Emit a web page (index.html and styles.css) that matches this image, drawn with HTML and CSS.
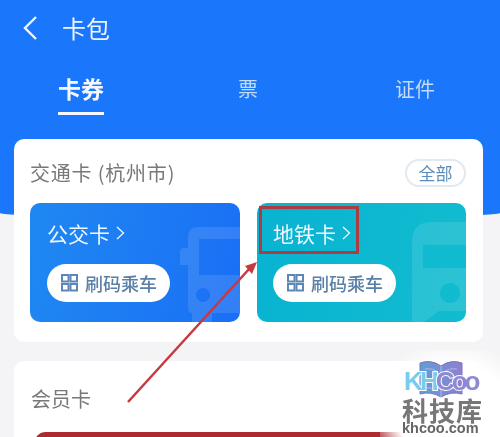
FILE: index.html
```html
<!DOCTYPE html>
<html lang="zh-CN">
<head>
  <meta charset="UTF-8" />
  <meta name="viewport" content="width=device-width, initial-scale=1.0" />
  <title>卡包</title>
  <link rel="stylesheet" href="styles.css">
</head>
<body>
  <div class="page">
    <div class="hero">
      <div class="topbar">
        <svg class="back" width="16" height="26" viewBox="0 0 16 26"><path d="M14 2 L3 13 L14 24" /></svg>
        <span class="title">卡包</span>
      </div>
      <div class="tabs">
        <span class="tab active">卡券</span>
        <span class="tab">票</span>
        <span class="tab">证件</span>
      </div>
    </div>

    <div class="content">
      <section class="card">
        <div class="card-head">
          <h2>交通卡 (杭州市)</h2>
          <span class="all">全部</span>
        </div>
        <div class="transit">
          <div class="pass bus">
            <svg class="pass-bg" width="62" height="99" viewBox="0 0 62 99">
              <path fill-rule="evenodd" d="M2 29 a4 4 0 0 1 4 -4 H10 V14 Q10 4 20 4 H62 V90 H34 V99 H14 V90 Q10 90 10 84 V42 H2 Z M21 16 V52 H62 V16 Z M25 65 a7 7 0 1 0 0.01 0 Z" />
            </svg>
            <div class="pass-name">公交卡
              <svg width="9" height="14" viewBox="0 0 9 14"><path d="M1 1 L7.5 7 L1 13" /></svg>
            </div>
            <div class="scan">
              <svg width="18" height="18" viewBox="0 0 18 18">
                <rect x="1" y="1" width="6.5" height="6.5" />
                <rect x="9.5" y="1" width="6.5" height="6.5" />
                <rect x="1" y="10" width="6.5" height="6.5" />
                <rect x="9.5" y="10" width="6.5" height="6.5" />
              </svg>
              刷码乘车
            </div>
          </div>
          <div class="pass metro">
            <svg class="pass-bg" width="54" height="100" viewBox="0 0 54 100">
              <path fill-rule="evenodd" d="M0 20 Q0 0 20 0 H54 V89 H27 L12 100 H0 Z M11 23 V46 H54 V23 Z M38 61 a10 10 0 1 0 0.01 0 Z" />
            </svg>
            <div class="pass-name">地铁卡
              <svg width="9" height="14" viewBox="0 0 9 14"><path d="M1 1 L7.5 7 L1 13" /></svg>
            </div>
            <div class="scan">
              <svg width="18" height="18" viewBox="0 0 18 18">
                <rect x="1" y="1" width="6.5" height="6.5" />
                <rect x="9.5" y="1" width="6.5" height="6.5" />
                <rect x="1" y="10" width="6.5" height="6.5" />
                <rect x="9.5" y="10" width="6.5" height="6.5" />
              </svg>
              刷码乘车
            </div>
          </div>
        </div>
      </section>

      <section class="card member">
        <h2>会员卡</h2>
        <div class="member-card"></div>
      </section>
    </div>

    <!-- red annotation drawn over the screenshot -->
    <div class="mark-box"></div>
    <svg class="arrow" width="500" height="437" viewBox="0 0 500 437">
      <path class="arrow-line" d="M128 402 L250 268" />
      <path class="arrow-head" d="M257 262 L245 266 L252 274 Z" />
    </svg>

    <div class="watermark">
      <div class="wm-logo">
        <svg class="wm-book" width="44" height="38" viewBox="0 0 44 38">
          <defs>
            <linearGradient id="bookFill" x1="0" y1="0" x2="1" y2="0">
              <stop offset="0" stop-color="#5f9fd6" />
              <stop offset="1" stop-color="#8f7fd0" />
            </linearGradient>
          </defs>
          <path d="M1 3 Q12 -1 22 6 Q32 -1 43 3 V34 Q32 31 22 37 Q12 31 1 34 Z" />
          <path class="wm-pages" d="M22 6 V37 M6 9 Q14 8 19 12 M38 9 Q30 8 25 12 M6 28 Q14 27 19 31 M38 28 Q30 27 25 31" />
        </svg>
        <span class="wm-name"><b>KH</b><i>Coo</i></span>
      </div>
      <div class="wm-cn">科技库</div>
      <div class="wm-url">khcoo.com</div>
    </div>
  </div>
</body>
</html>
```

FILE: styles.css
```css
* {
  box-sizing: border-box;
}

body {
  margin: 0;
  font-family: "Noto Sans CJK SC", "Noto Sans", sans-serif;
}

.page {
  position: relative;
  width: 500px;
  height: 437px;
  overflow: hidden;
  background-color: #f4f4f6;
  filter: blur(0.5px);
}

.hero {
  height: 218px;
  background-color: #1a76fb;
  border-radius: 0 0 250px 250px / 0 0 5px 5px;
  color: #fff;
}

.topbar {
  display: flex;
  align-items: center;
  height: 56px;
  padding-left: 22px;
}

.back {
  fill: none;
  stroke: #f1f6ff;
  stroke-width: 2.4;
}

.title {
  margin-left: 24px;
  font-size: 24px;
  line-height: 1;
  color: #eef5ff;
}

.tabs {
  display: grid;
  grid-template-columns: 180px 157px auto;
  align-items: start;
  padding: 18px 0 0 58px;
}

.tab {
  justify-self: start;
  padding-top: 3px;
  font-size: 20px;
  line-height: 24px;
  color: #c4dcf8;
}

.tab.active {
  padding: 0 0 10px;
  font-size: 23px;
  line-height: 28px;
  font-weight: 700;
  color: #f5f9ff;
  border-bottom: 3px solid #f5f9ff;
}

.content {
  display: flex;
  flex-direction: column;
  gap: 19px;
  margin: -79px 17px 0 14px;
}

.card {
  padding: 19px 17px 20px 16px;
  background-color: #fff;
  border-radius: 10px;
}

.card h2 {
  margin: 0;
  font-size: 20px;
  line-height: 30px;
  font-weight: 400;
  color: #77787b;
}

.card-head {
  display: flex;
  justify-content: space-between;
  align-items: center;
  height: 30px;
}

.card-head h2 {
  letter-spacing: 0.8px;
}

.all {
  width: 61px;
  height: 28px;
  border: 2px solid #e2e9f0;
  border-radius: 14px;
  font-size: 17px;
  line-height: 24px;
  text-align: center;
  color: #5b8dbd;
}

.transit {
  display: flex;
  gap: 17px;
  margin-top: 15px;
}

.pass {
  position: relative;
  width: 210px;
  height: 119px;
  padding: 15px 0 0 17px;
  border-radius: 10px;
  overflow: hidden;
  color: #eef6ff;
}

.pass.bus {
  background: linear-gradient(100deg, #1f88f2, #1a6ff5);
}

.pass.metro {
  width: 209px;
  padding-left: 16px;
  background: linear-gradient(100deg, #08b3d2, #12bccf);
}

.pass-bg {
  position: absolute;
  right: 0;
  bottom: 0;
  fill: rgba(255, 255, 255, 0.11);
}

.pass-name {
  position: relative;
  display: flex;
  align-items: center;
  gap: 6px;
  font-size: 21px;
  line-height: 30px;
}

.pass-name svg {
  fill: none;
  stroke: #eef6ff;
  stroke-width: 1.3;
}

.scan {
  position: relative;
  display: flex;
  align-items: center;
  gap: 6px;
  width: 123px;
  height: 38px;
  margin-top: 16px;
  padding-left: 14px;
  background-color: #fff;
  border-radius: 19px;
  font-size: 18px;
  font-weight: 500;
  white-space: nowrap;
  color: #5a80a8;
}

.scan svg {
  flex: none;
  fill: none;
  stroke: #5c87b6;
  stroke-width: 2;
}

.member {
  height: 120px;
  padding: 23px 0 0 17px;
}

.member-card {
  height: 20px;
  margin: 18px 17px 0 4px;
  background-color: #ac2a30;
  border-radius: 10px 10px 0 0;
}

/* annotation */
.mark-box {
  position: absolute;
  left: 259px;
  top: 206px;
  width: 100px;
  height: 48px;
  border: 3px solid #ac3c44;
}

.arrow {
  position: absolute;
  left: 0;
  top: 0;
}

.arrow-line {
  fill: none;
  stroke: #c8383e;
  stroke-width: 2.5;
}

.arrow-head {
  fill: #c8383e;
}

/* site watermark */
.watermark {
  position: absolute;
  right: 0;
  bottom: 0;
  display: flex;
  flex-direction: column;
  align-items: flex-start;
  width: 120px;
  height: 87px;
  padding: 10px 0 0 22px;
  background: radial-gradient(ellipse 84px 70px at 60% 70%, #fff 68%, rgba(255, 255, 255, 0));
}

.wm-logo {
  position: relative;
  width: 80px;
  height: 38px;
}

.wm-book {
  position: absolute;
  left: 17px;
  top: 0;
  fill: url(#bookFill);
  stroke: #7a74bb;
  stroke-width: 1;
}

.wm-pages {
  fill: none;
  stroke: #b9b6e6;
}

.wm-name {
  position: absolute;
  left: 2px;
  top: 6px;
  font-family: "Liberation Sans", sans-serif;
  font-size: 26px;
  line-height: 30px;
  font-weight: 700;
  letter-spacing: -2.9px;
  white-space: nowrap;
  -webkit-text-stroke: 2px #fff;
  paint-order: stroke fill;
}

.wm-name b {
  color: #78cdee;
}

.wm-name i {
  font-style: normal;
  color: #8f88d2;
}

.wm-cn {
  font-size: 26px;
  line-height: 24px;
  font-weight: 700;
  letter-spacing: 1px;
  color: #777;
}

.wm-url {
  font-family: "Liberation Sans", sans-serif;
  font-size: 14.5px;
  line-height: 12px;
  font-weight: 700;
  color: #666;
}
```
